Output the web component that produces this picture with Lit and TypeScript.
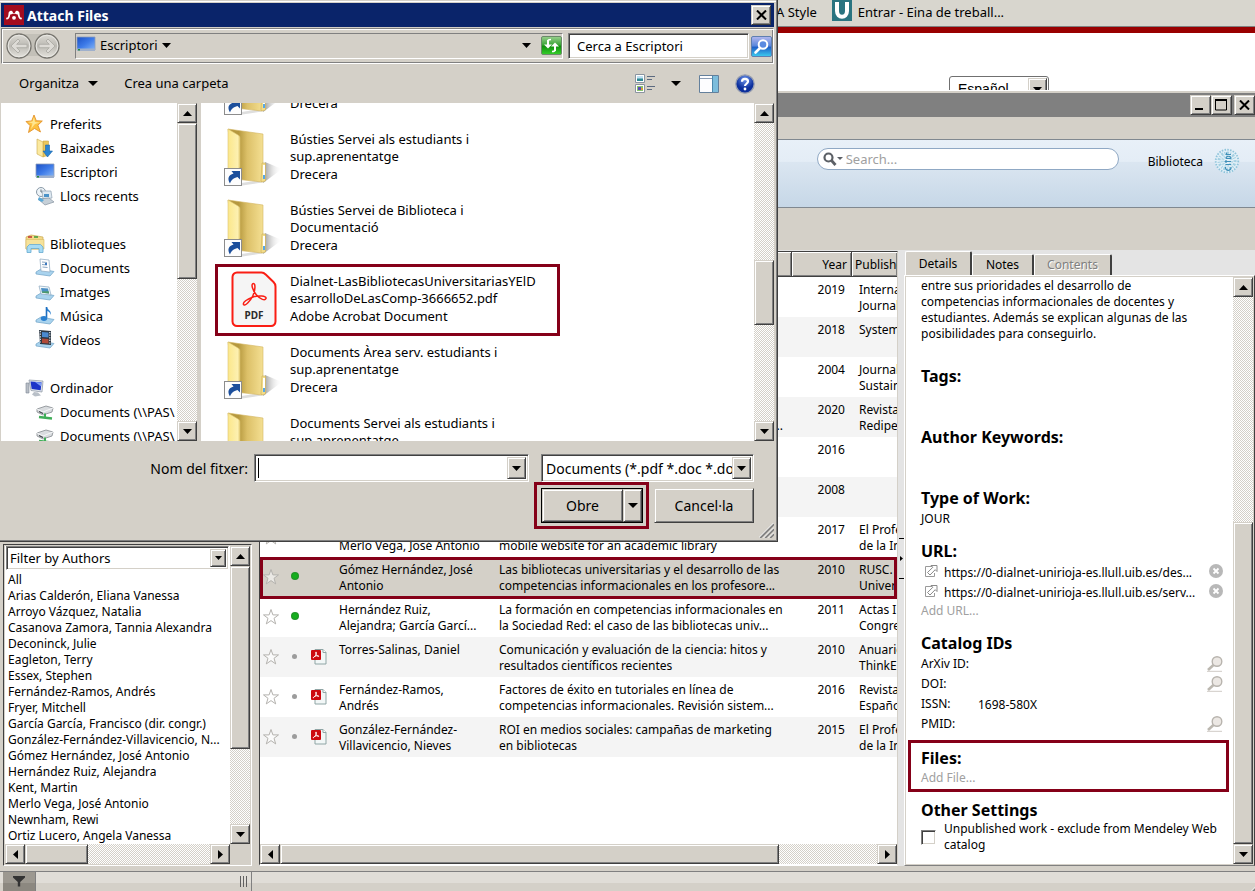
import { LitElement, html, css, nothing, TemplateResult } from "lit";
import { customElement, property } from "lit/decorators.js";

/* ---------- shared classic window styling ---------- */
const classic = css`
  *, *::before, *::after { box-sizing: border-box; }
  button, input, select { font: inherit; color: inherit; margin: 0; padding: 0; border-radius: 0; outline: none; }
  button, select { appearance: none; cursor: default; }
  ul, dl, dd, h2, h3, p { margin: 0; padding: 0; }
  ul { list-style: none; }
  a { color: inherit; text-decoration: none; }
  svg { display: block; flex: none; }
  .raised {
    background: #d4d0c8;
    border: 1px solid;
    border-color: #d4d0c8 #404040 #404040 #d4d0c8;
    box-shadow: inset 1px 1px #fff, inset -1px -1px #808080;
  }
  .sunken {
    background: #fff;
    border: 1px solid;
    border-color: #808080 #fff #fff #808080;
    box-shadow: inset 1px 1px #404040, inset -1px -1px #d4d0c8;
  }
  .glyph { display: flex; align-items: center; justify-content: center; }
  .combo { display: flex; padding: 2px; }
  .combo > .field { flex: 1; min-width: 0; border: 0; background: none; }
  .combo > .drop { flex: none; width: 19px; }
  .mark { position: absolute; border: 3px solid #850018; pointer-events: none; z-index: 2; }
`;

const arrow = (dir: "up" | "down" | "left" | "right") => {
  const d = {
    up: "M0 5h9L4.5 0z",
    down: "M0 0h9L4.5 5z",
    left: "M5 0v9L0 4.5z",
    right: "M0 0v9L5 4.5z",
  }[dir];
  const v = dir === "up" || dir === "down";
  return html`<svg width=${v ? 9 : 5} height=${v ? 5 : 9} aria-hidden="true"><path d=${d}/></svg>`;
};

const wideArrow = html`<svg width="10" height="5" aria-hidden="true"><path d="M0 0h10L5 5z"/></svg>`;
const closeGlyph = html`<svg width="11" height="10" viewBox="0 0 11 10"><path d="M1 .5l9 9M10 .5l-9 9" stroke="#000" stroke-width="2"/></svg>`;

@customElement("scroll-bar")
class ScrollBar extends LitElement {
  @property({ type: Boolean, reflect: true }) horizontal = false;
  @property({ type: Number }) before = 0;
  @property({ type: Number }) thumb = 1;
  @property({ type: Number }) after = 1;
  static styles = [classic, css`
    :host {
      display: flex; flex-direction: column; flex: none; width: 20px;
      background: repeating-conic-gradient(#fff 0 25%, #d4d0c8 0 50%) 0 0 / 2px 2px;
    }
    :host([horizontal]) { flex-direction: row; width: auto; height: 20px; }
    button { flex: none; width: 20px; height: 20px; }
    .space { flex-basis: 0; }
  `];
  render() {
    const h = this.horizontal;
    return html`
      <button class="raised glyph" aria-label=${h ? "Left" : "Up"}>${arrow(h ? "left" : "up")}</button>
      <div class="space" style="flex-grow:${this.before}"></div>
      <div class="space raised" style="flex-grow:${this.thumb}"></div>
      <div class="space" style="flex-grow:${this.after}"></div>
      <button class="raised glyph" aria-label=${h ? "Right" : "Down"}>${arrow(h ? "right" : "down")}</button>`;
  }
}

/* ---------- dialog icons ---------- */
const mendeley = html`<svg width="20" height="20" viewBox="0 0 20 20"><rect width="20" height="20" fill="#a30c1e"/>
  <g fill="none" stroke="#fff" stroke-width="1.800" stroke-linecap="round"><path d="M3 13.500c1.800 0 2.200-1.500 2.500-5.500M17 13.500c-1.800 0-2.200-1.500-2.500-5.500"/></g>
  <path d="M5 7c1.200-1.800 3.300-1.500 3.800.3.300 1.200 2.100 1.200 2.400 0C11.700 5.500 13.800 5.200 15 7c.8 1.800-1 3-2.400 2.300-1.500-.6-3.700-.6-5.200 0C6 10 4.200 8.800 5 7z" fill="#fff"/><circle cx="10" cy="12.800" r="1.900" fill="#fff"/></svg>`;

const navArrows = html`<svg width="56" height="28" viewBox="0 0 56 28">
  <defs><linearGradient id="nb" x2="0" y2="1"><stop offset="0" stop-color="#dcdad4"/><stop offset=".5" stop-color="#bcbab4"/><stop offset="1" stop-color="#e6e4de"/></linearGradient></defs>
  <path d="M14 2h28v22H14z" fill="#c3c0b8"/>
  <g fill="url(#nb)" stroke="#77756f" stroke-width="1.3"><circle cx="14" cy="14" r="12"/><circle cx="42" cy="14" r="12"/></g>
  <g fill="none" stroke="#e9e8e4" stroke-width="1"><circle cx="14" cy="14" r="10.800"/><circle cx="42" cy="14" r="10.800"/></g>
  <g fill="#dddbd6" stroke="#aaa8a2" stroke-width=".8"><path d="M6 14l7-7 2 2-3.300 3.300H22v3.400H11.700L15 19l-2 2z"/><path d="M50 14l-7-7-2 2 3.300 3.300H34v3.400h10.300L41 19l2 2z"/></g></svg>`;

const desktop = html`<svg width="20" height="18" viewBox="0 0 20 18">
  <defs><linearGradient id="dk" x2="1" y2="1"><stop offset="0" stop-color="#1c50c4"/><stop offset=".5" stop-color="#3d7ae8"/><stop offset="1" stop-color="#86b6f6"/></linearGradient></defs>
  <path d="M1 1h18v13H1z" fill="url(#dk)" stroke="#8d9cb8" stroke-width=".8"/><path d="M1 12.500h18V15H1z" fill="#9fb0cc"/><path d="M2 13h2v1.500H2z" fill="#2a8a3a"/></svg>`;

const star = html`<svg width="20" height="20" viewBox="0 0 20 20"><path d="M9 1l2.300 5.700 6 .3-4.400 4.200L15.500 18 9.500 14.500 3.500 18.500l1.600-6.800L1 7.500l5.700-.6z" fill="#fdc040" stroke="#e08a20" stroke-width=".8"/><path d="M9 3l1 5 5 .5-5 1.500-4 5 1.500-5.500L3 8l4.500-.5z" fill="#ffe690"/></svg>`;
const download = html`<svg width="20" height="20" viewBox="0 0 20 20"><path d="M8 3h5.500v14L8 19z" fill="#ecc75a" stroke="#c9a848" stroke-width=".6"/><path d="M2 1l6 3v15l-6-3z" fill="#fbe9a0" stroke="#c9a848" stroke-width=".6"/><path d="M10.500 7h4v6h3L12.500 19 8 13h2.500z" fill="#2a84d2" stroke="#1b64aa" stroke-width=".6"/></svg>`;
const recent = html`<svg width="20" height="20" viewBox="0 0 20 20"><circle cx="6" cy="6" r="4.500" fill="#eef4f8" stroke="#8a9aa8"/><path d="M6 3.500V6h2.500" stroke="#5a6a78" fill="none"/><path d="M7 5h9l1 7-9 1z" fill="#dfe9f1" stroke="#90a2b2" stroke-width=".7"/><path d="M9 8h5v3H9z" fill="#4a92c8"/><path d="M3 13l11-1 5 4-9 3z" fill="#c6d0d8" stroke="#8794a0" stroke-width=".7"/><path d="M4 11l5 3-2 2-4-2z" fill="#58a8d8"/></svg>`;
const libraries = html`<svg width="20" height="20" viewBox="0 0 20 20"><path d="M1 3l5-2 12 2v12H1z" fill="#f3d988" stroke="#c8a850" stroke-width=".7"/><path d="M3 3h4" stroke="#c03030" stroke-width="1.500"/><path d="M9 3h4" stroke="#3a9a3a" stroke-width="1.500"/><path d="M1 5.500h18V15H1z" fill="#f6e29a" stroke="#d8b860" stroke-width=".6"/><path d="M2 18.500V13l2.500-2.500h11L18 13v5.500h-4v-4H6v4z" fill="#a7dbf4" stroke="#66a9d0" stroke-width=".8"/></svg>`;
const docLib = html`<svg width="20" height="20" viewBox="0 0 20 20"><path d="M1 14l5-3 13 2.500-4 4.500L1 16z" fill="#a9d3ee" stroke="#6fa2c6" stroke-width=".7"/><path d="M5 1l9 1 1 12-9-1z" fill="#fdfeff" stroke="#8aa6be" stroke-width=".7"/><path d="M7 4l5 .5M7 6.500l5 .5M7.500 9l5 .5" stroke="#7c9cba" stroke-width=".9"/><path d="M10 5h2v2h-2z" fill="#3a78c0"/></svg>`;
const picLib = html`<svg width="20" height="20" viewBox="0 0 20 20"><path d="M1 14l5-3 13 2.500-4 4.500L1 16z" fill="#a9d3ee" stroke="#6fa2c6" stroke-width=".7"/><path d="M4 4l10 1 2 8-10-1z" fill="#f5fafc" stroke="#8aa6be" stroke-width=".7"/><path d="M6 6l7 .6 1 4.800-7-.6z" fill="#4b8fc4"/><path d="M6.700 9.500l7-.3.5 2.200-7-.6z" fill="#4f9a68"/></svg>`;
const musicLib = html`<svg width="20" height="20" viewBox="0 0 20 20"><path d="M1 14l5-3 13 2.500-4 4.500L1 16z" fill="#a9d3ee" stroke="#6fa2c6" stroke-width=".7"/><path d="M11.500 1v11" stroke="#1e6fc0" stroke-width="1.600"/><ellipse cx="9" cy="12.500" rx="3.200" ry="2.400" fill="#2a80d0"/><path d="M12 1c.5 3 5 3.500 3.500 8-.3-2.500-1.500-3.500-3.500-4z" fill="#2a80d0"/></svg>`;
const videoLib = html`<svg width="20" height="20" viewBox="0 0 20 20"><path d="M1 14l5-3 13 2.500-4 4.500L1 16z" fill="#a9d3ee" stroke="#6fa2c6" stroke-width=".7"/><path d="M4 0l12 1v14L5 14z" fill="#2c3844"/><path d="M7 2l6.500.6v4.800L7 7z" fill="#4a8ad0"/><path d="M7 8.500l6.500.4v4.500L7 13z" fill="#b04a38"/><path d="M5.300 1v13M14.800 2v13" stroke="#e8eef4" stroke-width="1.200" stroke-dasharray="1.200 1.400"/></svg>`;
const computer = html`<svg width="20" height="20" viewBox="0 0 20 20"><path d="M1 5h3v10H1z" fill="#b8bec6" stroke="#7e8894" stroke-width=".6"/><path d="M4 2l14 1-1 11-11-1.500z" fill="#dfe4ea" stroke="#8892a0" stroke-width=".7"/><path d="M5.500 3.500l11 .8-.8 8-9-1.200z" fill="#1c34c8"/><path d="M10 4l6.500.4-.4 4z" fill="#7c9cf4"/><path d="M9 14l4 .5 3 3-6 1-3-2z" fill="#b9c0c8"/></svg>`;
const drive = html`<svg width="20" height="20" viewBox="0 0 20 20"><path d="M2 7l9-3 7 2-1 4-9 3-6-3z" fill="#d9dcdf" stroke="#84898e" stroke-width=".8"/><path d="M2 7l6 3 10-4" fill="none" stroke="#f6f7f8"/><path d="M4 9.500l4 2" stroke="#3a3f44" stroke-width="1.200"/><path d="M4 15l13 1.500" stroke="#3fae58" stroke-width="2.400"/><path d="M10 11.500v4" stroke="#3fae58" stroke-width="2"/></svg>`;

const folder = html`<svg width="60" height="62" viewBox="0 0 60 62">
  <defs>
    <linearGradient id="fb"><stop offset=".3" stop-color="#b5983e"/><stop offset=".55" stop-color="#dcc068"/><stop offset="1" stop-color="#f4df92"/></linearGradient>
    <linearGradient id="ff"><stop offset="0" stop-color="#fbe78a"/><stop offset=".8" stop-color="#fdf0b0"/><stop offset="1" stop-color="#e6cf78"/></linearGradient>
    <linearGradient id="fs"><stop offset="0" stop-color="#909090"/><stop offset="1" stop-color="#fff" stop-opacity="0"/></linearGradient>
  </defs>
  <path d="M42 37l17 7-19 14z" fill="url(#fs)"/><path d="M12 59l26-4 4 2-26 4z" fill="#dedede"/>
  <path d="M5 4l35 5v47l-1 1-27-3z" fill="url(#fb)" stroke="#d3b662" stroke-width=".6"/>
  <path d="M39 38h3.500v18l-3.500 1-1-1z" fill="#f3dc8a" stroke="#cbae58" stroke-width=".6"/><path d="M40 40h2v14h-2z" fill="#fff"/><path d="M40 50h2v4h-2z" fill="#58a8e8"/>
  <path d="M5 4l10 6c2 1 2 2 2 4v28l-2 3v14L5 54z" fill="url(#ff)" stroke="#dcc472" stroke-width=".6"/>
  <rect x="1.500" y="43.500" width="17" height="17" fill="#fdfdfd" stroke="#8c8c8c"/>
  <path d="M7 58.500c-3-5-1.500-8.500 3.500-10L8.500 46H17v8.500l-2.500-2.500c-4 1-6 2.500-7.500 6.500z" fill="#1c4f9c"/></svg>`;

const pdfLarge = html`<svg width="60" height="62" viewBox="-1 0 60 62">
  <path d="M13 5.500h24.500c2 0 3 .8 4.500 2.200l7.500 7.300c1.500 1.400 2 2.500 2 4.500v35a4.500 4.500 0 0 1-4.500 4.500H13a4.500 4.500 0 0 1-4.500-4.500V10A4.500 4.500 0 0 1 13 5.500z" fill="#f5f5f5" stroke="#fa1e14" stroke-width="2"/>
  <path d="M29.500 16.500c-3 0-1 7 3 11.500s8.500 6 9.500 3.500-8-3.500-13-1.500-10.500 5-9.500 7.500 7-3.500 9.500-9 2.500-12 .5-12z" fill="none" stroke="#fa1e14" stroke-width="1.500"/>
  <text x="30" y="51.500" text-anchor="middle" font-family="Noto Sans, sans-serif" font-size="10" font-weight="700" fill="#2c2c2c">PDF</text></svg>`;

const refresh = html`<svg width="21" height="19" viewBox="0 0 21 19"><defs><linearGradient id="gr" x2="0" y2="1"><stop offset="0" stop-color="#9bd08f"/><stop offset=".45" stop-color="#3da63a"/><stop offset=".55" stop-color="#12900f"/><stop offset="1" stop-color="#35d02a"/></linearGradient></defs>
  <rect x=".5" y=".5" width="20" height="18" rx="1.500" fill="url(#gr)" stroke="#6c8a6a"/>
  <path d="M7 4v5M14 15v-5" stroke="#fff" stroke-width="2"/><path d="M7 5q0-1.500 3-1.500" stroke="#fff" stroke-width="1.600" fill="none"/><path d="M14 14q0 1.500-3 1.500" stroke="#fff" stroke-width="1.600" fill="none"/><path d="M3 8.500h8L7 12.500zM10 10.500h8L14 6.500z" fill="#fff"/></svg>`;
const lens = html`<svg width="21" height="21" viewBox="0 0 21 21"><defs><linearGradient id="ls" x2="0" y2="1"><stop offset="0" stop-color="#b4b8ee"/><stop offset=".45" stop-color="#5c88dc"/><stop offset=".55" stop-color="#1f62c8"/><stop offset="1" stop-color="#3ccdf0"/></linearGradient></defs>
  <rect x=".5" y=".5" width="20" height="20" rx="1.500" fill="url(#ls)" stroke="#5f7fb0"/><circle cx="12" cy="8.500" r="4.300" fill="#5a8ae0" stroke="#fff" stroke-width="2"/><path d="M9 12l-4.500 4.500" stroke="#fff" stroke-width="2.600" stroke-linecap="round"/></svg>`;
const views = html`<svg width="20" height="20" viewBox="0 0 20 20"><g fill="#fff" stroke="#8a94a0"><path d="M.5.5h9v8h-9zM.5 10.500h9v8h-9z"/></g><path d="M2 2h6v5H2z" fill="#bfe0f2"/><path d="M2 4.500h6V7H2z" fill="#2f8a94"/><path d="M2 12h6v5H2z" fill="#8ac46c"/><path d="M3 13h3v3H3z" fill="#5a4ab8"/><path d="M6 14h2v2H6z" fill="#d8a030"/><path d="M12 2.500h8M12 5.500h5M12 12.500h8M12 15.500h5" stroke="#5c6a80"/></svg>`;
const preview = html`<svg width="20" height="18" viewBox="0 0 20 18"><path d="M.5.5h19v17H.5z" fill="#fdfdff" stroke="#64809c"/><path d="M1 3.500h12" stroke="#8a9cb4"/><path d="M13.500 1h5.500v16h-5.500z" fill="#7dbddc"/><path d="M13.500 1v16" stroke="#4c88ac"/></svg>`;
const help = html`<svg width="20" height="20" viewBox="0 0 20 20"><defs><radialGradient id="hp" cy=".25"><stop offset="0" stop-color="#6f96ec"/><stop offset="1" stop-color="#0c2f9c"/></radialGradient></defs><circle cx="10" cy="10" r="9.200" fill="url(#hp)" stroke="#9aa0b0" stroke-width="1.300"/><path d="M7 7.800c0-4 6-3.700 6-.3 0 2.200-3 2.300-3 4.500" fill="none" stroke="#fff" stroke-width="2.200"/><circle cx="10" cy="15" r="1.400" fill="#fff"/></svg>`;

const sizeGrip = html`<svg class="grip" width="15" height="15" viewBox="0 0 15 15"><path d="M1 15L15 1M6 15l9-9M11 15l4-4" stroke="#808080" stroke-width="2"/><path d="M-.5 15L15-.5M4.500 15L15 4.500M9.500 15L15 9.500" stroke="#fff"/></svg>`;

interface Place { label: string; icon: TemplateResult; group?: boolean; gap?: boolean }
const places: Place[] = [
  { label: "Preferits", icon: star, group: true },
  { label: "Baixades", icon: download },
  { label: "Escriptori", icon: desktop },
  { label: "Llocs recents", icon: recent },
  { label: "Biblioteques", icon: libraries, group: true, gap: true },
  { label: "Documents", icon: docLib },
  { label: "Imatges", icon: picLib },
  { label: "Música", icon: musicLib },
  { label: "Vídeos", icon: videoLib },
  { label: "Ordinador", icon: computer, group: true, gap: true },
  { label: "Documents (\\\\PAS\\", icon: drive },
  { label: "Documents (\\\\PAS\\", icon: drive },
];

interface FileItem { name: string[]; kind: string; pdf?: boolean }
const files: FileItem[] = [
  { name: ["", ""], kind: "Drecera" },
  { name: ["Bústies Servei als estudiants i", "sup.aprenentatge"], kind: "Drecera" },
  { name: ["Bústies Servei de Biblioteca i", "Documentació"], kind: "Drecera" },
  { name: ["Dialnet-LasBibliotecasUniversitariasYElD", "esarrolloDeLasComp-3666652.pdf"], kind: "Adobe Acrobat Document", pdf: true },
  { name: ["Documents Àrea serv. estudiants i", "sup.aprenentatge"], kind: "Drecera" },
  { name: ["Documents Servei als estudiants i", "sup.aprenentatge"], kind: "" },
];

@customElement("attach-dialog")
class AttachDialog extends LitElement {
  static styles = [classic, css`
    :host {
      display: flex; flex-direction: column; background: #d4d0c8;
      border: solid; border-width: 0 1px 1px 0; border-color: #404040;
      box-shadow: inset -1px -1px #808080, inset 0 1px #d4d0c8, inset 0 2px #fff;
      padding: 3px 3px 3px 1px; font-size: 13px; line-height: 17px;
    }
    .title { display: flex; align-items: center; gap: 3px; height: 24px; padding: 0 3px; background: #0a246a; color: #fff; }
    .title h2 { flex: 1; font-size: 14px; }
    .title button { width: 20px; height: 20px; }
    .nav { display: flex; align-items: center; height: 36px; margin-top: 1px; padding: 0 1px 0 3px; border: 1px solid; border-color: #808080 #fff #fff #808080; box-shadow: inset 1px 1px #fff, inset -1px -1px #808080; }
    .path { flex: 1; display: flex; align-items: center; gap: 4px; height: 26px; margin: 0 5px 0 14px; padding-bottom: 2px; border: 1px solid; border-color: #808080 #fff #fff #808080; }
    .path .fill { flex: 1; }
    .path button { border: 0; background: none; }
    .path .go { margin-left: 6px; }
    .search { width: 181px; height: 26px; padding: 0 8px 1px; margin-right: 2px; }
    .search::placeholder { color: #000; opacity: 1; }
    .lens { border: 0; background: none; }
    .tools { display: flex; align-items: center; height: 39px; padding: 0 19px 0 18px; }
    .tools button { display: flex; align-items: center; gap: 9px; border: 0; background: none; }
    .tools .new { margin: 0 auto 0 26px; }
    .tools .views { gap: 16px; margin-right: 18px; }
    .tools .pane { margin-right: 16px; }
    .body { flex: 1; min-height: 0; display: flex; gap: 4px; }
    .side { display: flex; width: 196px; background: #fff; }
    .places { flex: 1; min-width: 0; overflow: hidden; padding-top: 9px; }
    .places li { display: flex; align-items: center; gap: 5px; height: 24px; padding-left: 34px; white-space: nowrap; }
    .places li.group { padding-left: 24px; }
    .places li.gap { margin-top: 24px; }
    .main { flex: 1; min-width: 0; display: flex; background: #fff; }
    .files { flex: 1; min-width: 0; overflow: hidden; }
    .files ul { margin-top: -49px; }
    .files li { position: relative; display: flex; gap: 7px; height: 71px; padding-left: 22px; white-space: pre; }
    .files .name { padding-top: 6px; }
    .files .name div { height: 17px; }
    .files .kind { line-height: 18px; }
    .files .mark { inset: -3px 194px 2px 14px; }
    form { display: grid; grid-template-columns: 246px 275px 219px; grid-template-rows: 28px 35px; gap: 6px 6px; padding: 13px 0 15px 1px; font-size: 14px; position: relative; }
    form label { justify-self: end; align-self: center; }
    .type { margin-left: 6px; }
    .type .field { padding-left: 2px; text-overflow: clip; }
    .name-field .field { padding-left: 2px; }
    .name-field .field:placeholder-shown { background: linear-gradient(#000, #000) 1px 50% / 1px 20px no-repeat; }
    .actions { grid-column: 3; display: flex; justify-content: space-between; padding-left: 6px; }
    .open { position: relative; display: flex; width: 102px; border: 1px solid #000; }
    .open .text { flex: 1; }
    .open .more { width: 19px; }
    .open .mark { inset: -7px -7px -7px -8px; }
    .cancel { width: 100px; }
    .grip { position: absolute; right: 0; bottom: 0; }
  `];
  render() {
    return html`
      <div class="title">${mendeley}<h2>Attach Files</h2><button class="raised glyph" aria-label="Close">${closeGlyph}</button></div>
      <div class="nav">
        ${navArrows}
        <div class="path">${desktop}<span>Escriptori</span><button aria-label="Open path">${arrow("down")}</button><span class="fill"></span>
          <button aria-label="Previous locations">${arrow("down")}</button><button class="go" aria-label="Refresh">${refresh}</button></div>
        <input class="search sunken" placeholder="Cerca a Escriptori" aria-label="Cerca a Escriptori">
        <button class="lens" aria-label="Search">${lens}</button>
      </div>
      <div class="tools">
        <button>Organitza ${wideArrow}</button>
        <button class="new">Crea una carpeta</button>
        <button class="views" aria-label="Views">${views}${wideArrow}</button>
        <button class="pane" aria-label="Preview pane">${preview}</button>
        <button aria-label="Help">${help}</button>
      </div>
      <div class="body">
        <div class="side">
          <ul class="places">${places.map((p) => html`<li class="${p.group ? "group" : ""} ${p.gap ? "gap" : ""}">${p.icon}<span>${p.label}</span></li>`)}</ul>
          <scroll-bar .before=${0} .thumb=${155} .after=${143}></scroll-bar>
        </div>
        <div class="main">
          <div class="files"><ul>${files.map((f) => html`<li>${f.pdf ? pdfLarge : folder}
            <div class="name">${f.name.map((n) => html`<div>${n}</div>`)}<div class="kind">${f.kind}</div></div>
            ${f.pdf ? html`<span class="mark"></span>` : nothing}</li>`)}</ul></div>
          <scroll-bar .before=${138} .thumb=${63} .after=${97}></scroll-bar>
        </div>
      </div>
      <form @submit=${(e: Event) => e.preventDefault()}>
        <label for="fname">Nom del fitxer:</label>
        <div class="combo sunken name-field"><input id="fname" class="field" placeholder=" "><button type="button" class="drop raised glyph" aria-label="Recent names">${arrow("down")}</button></div>
        <div class="combo sunken type"><select class="field" aria-label="File type"><option>Documents (*.pdf *.doc *.do</option></select><span class="drop raised glyph">${arrow("down")}</span></div>
        <div class="actions">
          <div class="open"><button type="submit" class="text raised">Obre</button><button type="button" class="more raised glyph" aria-label="More">${wideArrow}</button><span class="mark"></span></div>
          <button type="button" class="cancel raised">Cancel·la</button>
        </div>
        ${sizeGrip}
      </form>`;
  }
}

/* ---------- library window ---------- */
const rowStar = html`<svg width="18" height="18" viewBox="0 0 18 18"><path d="M9 1.500l1.900 5.400h5.600l-4.500 3.400 1.700 5.600L9 12.600l-4.700 3.300L6 10.300 1.500 6.900h5.600z" fill="rgba(255,255,255,.5)" stroke="#b4b2ae"/></svg>`;
const pdfSmall = html`<svg width="16" height="17" viewBox="0 0 16 17"><path d="M4 1.500h8l3 3v11.500H4z" fill="#f2f7f7" stroke="#8fa5a5"/><path d="M12 1.500v3h3" fill="#fff" stroke="#8fa5a5"/><rect x="0" y="2" width="10" height="10" rx="1" fill="#cc0a10"/><path d="M5 4c-.8 0-.3 2 .6 3.300s2.500 1.500 2.300.8S4 7.500 2.500 9.300 4 8.500 4.800 7 5.800 4 5 4z" fill="none" stroke="#fff" stroke-width=".9"/></svg>`;

interface Row { mark?: "unread" | "read"; pdf?: boolean; authors?: string[]; title?: string[]; tail?: boolean; year: string; pub: string[]; selected?: boolean }
const rows: Row[] = [
  { year: "2019", pub: ["Interna", "Journal"] },
  { year: "2018", pub: ["System"] },
  { year: "2004", pub: ["Journal", "Sustain"] },
  { year: "2020", pub: ["Revista", "Redipe"], title: ["", "..."], tail: true },
  { year: "2016", pub: [] },
  { year: "2008", pub: [] },
  { year: "2017", pub: ["El Profe", "de la In"], authors: ["", "Merlo Vega, José Antonio"], title: ["", "mobile website for an academic library"] },
  { year: "2010", pub: ["RUSC.", "Univer"], authors: ["Gómez Hernández, José", "Antonio"], title: ["Las bibliotecas universitarias y el desarrollo de las", "competencias informacionales en los profesore..."], mark: "unread", selected: true },
  { year: "2011", pub: ["Actas I", "Congre"], authors: ["Hernández Ruiz,", "Alejandra; García Garcí..."], title: ["La formación en competencias informacionales en", "la Sociedad Red: el caso de las bibliotecas univ..."], mark: "unread" },
  { year: "2010", pub: ["Anuario", "ThinkE"], authors: ["Torres-Salinas, Daniel"], title: ["Comunicación y evaluación de la ciencia: hitos y", "resultados científicos recientes"], mark: "read", pdf: true },
  { year: "2016", pub: ["Revista", "Españo"], authors: ["Fernández-Ramos,", "Andrés"], title: ["Factores de éxito en tutoriales en línea de", "competencias informacionales. Revisión sistem..."], mark: "read", pdf: true },
  { year: "2015", pub: ["El Profe", "de la In"], authors: ["González-Fernández-", "Villavicencio, Nieves"], title: ["ROI en medios sociales: campañas de marketing", "en bibliotecas"], mark: "read", pdf: true },
];
const lines = (t?: string[]) => (t ?? []).map((l) => html`<div>${l}</div>`);

const authors = ["All", "Arias Calderón, Eliana Vanessa", "Arroyo Vázquez, Natalia", "Casanova Zamora, Tannia Alexandra", "Deconinck, Julie", "Eagleton, Terry", "Essex, Stephen", "Fernández-Ramos, Andrés", "Fryer, Mitchell", "García García, Francisco (dir. congr.)", "González-Fernández-Villavicencio, N...", "Gómez Hernández, José Antonio", "Hernández Ruiz, Alejandra", "Kent, Martin", "Merlo Vega, José Antonio", "Newnham, Rewi", "Ortiz Lucero, Angela Vanessa"];

const extLink = html`<svg width="14" height="14" viewBox="0 0 14 14"><path d="M8 2.500H1.500v10h9V9" fill="none" stroke="#9a9a9a"/><path d="M3.500 8.500L8.800 3.300 7 1.500h6v6l-1.800-1.800L6 11z" fill="#fff" stroke="#8a8a8a"/></svg>`;
const removeIcon = html`<svg width="14" height="14" viewBox="0 0 14 14"><circle cx="7" cy="7" r="7" fill="#b8b8b8"/><path d="M4.500 4.500l5 5M9.500 4.500l-5 5" stroke="#fff" stroke-width="1.800"/></svg>`;
const lookup = html`<svg width="16" height="16" viewBox="0 0 16 16"><path d="M0 15.500h15" stroke="#d8d4d0" stroke-width="1.500"/><path d="M6.500 9L1 14" stroke="#bcb8b0" stroke-width="2.600"/><circle cx="10" cy="5.500" r="4.800" fill="#ece8e4" stroke="#b8b4ae" stroke-width="1.400"/></svg>`;
const searchGlyph = html`<svg width="20" height="14" viewBox="0 0 20 14"><circle cx="5.500" cy="5.500" r="4" fill="none" stroke="#5c6066" stroke-width="2.200"/><path d="M8.500 8.500l4 4.500" stroke="#5c6066" stroke-width="2.800"/><path d="M14 5h6l-3 3z" fill="#5c6066"/></svg>`;
const badge = html`<svg width="26" height="26" viewBox="0 0 26 26"><circle cx="13" cy="13" r="12" fill="#e2eff7"/><circle cx="13" cy="13" r="11.300" fill="none" stroke="#8fc3da" stroke-width="1.800" stroke-dasharray="1.500 1.300"/><circle cx="13" cy="13" r="8" fill="none" stroke="#a4d0e2" stroke-width="3" stroke-dasharray="1 1.600 2 1.200"/><circle cx="13" cy="13" r="4.500" fill="none" stroke="#b6dae8" stroke-width="3" stroke-dasharray="1.500 1"/><g fill="none" stroke="#3f8fb8" stroke-width="1.200"><path d="M11.500 19c-.5 4.500 6 4.500 5.500 0M11.500 16.500h5.500M10.500 13.500h6.500M12 12v3M12 10.500c0-3 5-3 5 0M12 10.500h5M11.500 6.500h5.500M12.500 4.500v2"/></g></svg>`;
const funnel = html`<svg width="12" height="11" viewBox="0 0 12 11"><path d="M0 0h12v1.500L7.200 6v4.500H4.800V6L0 1.500z" fill="#333"/></svg>`;

@customElement("library-window")
class LibraryWindow extends LitElement {
  static styles = [classic, css`
    :host { display: flex; flex-direction: column; background: #d4d0c8; font-size: 12px; line-height: 16px; border-top: 1px solid #fff; padding-top: 2px; }
    .title { display: flex; align-items: center; justify-content: flex-end; height: 24px; background: #808080; }
    .title button { width: 21px; height: 20px; }
    .title .close { margin-left: 2px; }
    .menu { height: 22px; }
    .toolbar { display: flex; align-items: flex-start; justify-content: flex-end; gap: 29px; height: 69px; padding: 8px 15px 0 0; border: solid; border-width: 1px 0; border-color: #808890; background: linear-gradient(#e8f0f8, #e4edf6 32%, #dbe6f1 33%, #c6d7e7); }
    .search { display: flex; align-items: center; gap: 3px; width: 302px; height: 22px; padding: 0 5px; border: 1px solid #8fa8c4; border-radius: 11px; background: #fff; font-size: 13px; }
    .search input { flex: 1; border: 0; background: none; min-width: 0; }
    .search input::placeholder { color: #a0a0a0; opacity: 1; }
    .toolbar a { padding-top: 6px; }
    .account { display: flex; gap: 11px; }
    .strip { height: 42px; }
    .panes { flex: 1; min-height: 0; display: flex; background: #e4e4e4; }
    .left { display: flex; flex-direction: column; width: 252px; padding-left: 3px; background: #d4d0c8; }
    .tree { flex: 1; }
    .filter { display: grid; grid-template-columns: 1fr 20px; grid-template-rows: 1fr 20px; height: 322px; padding: 1px; border: 1px solid; border-color: #404040 #fff #fff #404040; }
    .filter .box { background: #fff; overflow: hidden; min-width: 0; }
    .filter .combo { height: 24px; margin: 0 1px 1px; font-size: 13px; }
    .filter .combo .drop { width: 16px; }
    .filter .combo .field { padding-left: 1px; }
    .filter .corner { background: #d4d0c8; }
    .filter li { height: 16px; line-height: 18px; padding-left: 3px; white-space: nowrap; }
    .gutter { width: 7px; background: #d4d0c8; }
    .center { flex: 1; min-width: 0; display: flex; flex-direction: column; margin-top: 1px; border-left: 1px solid #404040; border-top: 1px solid #404040; border-bottom: 2px solid #fff; border-right: 1px solid #d4d0c8; background: #fff; }
    .rows { flex: 1; overflow: hidden; position: relative; }
    table { width: 100%; table-layout: fixed; border-collapse: separate; border-spacing: 0; }
    th { height: 25px; padding: 2px 0 0 5px; font-weight: 400; text-align: left; white-space: nowrap; overflow: hidden; background: #d4d0c8; border: solid; border-width: 0 1px 1px 0; border-color: #404040; box-shadow: inset 1px 1px #fff, inset -1px -1px #808080; }
    th:last-child { padding-left: 3px; border-right: 0; }
    th.year { text-align: right; padding-right: 4px; }
    td { height: 40px; padding: 5px 0 0; vertical-align: top; white-space: nowrap; overflow: hidden; }
    td div { height: 16px; }
    tr:nth-child(even) td { background: #f4f4f4; }
    tr.selected td { background: #d4d0c8; }
    tr.selected { position: relative; }
    tr.selected td:last-child { overflow: visible; }
    tr .mark { inset: 0 0 -2px 0; }
    .c-star { width: 24px; } .c-dot { width: 22px; } .c-pdf { width: 24px; }
    .c-author { width: 160px; } .c-title { width: 302px; } .c-year { width: 60px; }
    td.star { padding: 11px 0 0 2px; }
    td.dot { padding: 15px 0 0 7px; }
    td.pdf { padding: 11px 0 0 5px; }
    td.text { padding-left: 9px; }
    td.tail { text-align: right; padding-right: 9px; }
    td.year { text-align: right; padding-right: 7px; }
    td.pub { padding-left: 7px; }
    .unread, .read { display: block; border-radius: 50%; }
    .unread { width: 8px; height: 8px; background: radial-gradient(#14b01c 30%, #2a7a30); }
    .read { width: 5px; height: 5px; margin: 2px 1px; background: #9c9c9c; }
    .splitter { display: flex; flex-direction: column; align-items: center; justify-content: center; width: 6px; }
    .splitter button { width: 5px; height: 41px; border: solid #000; border-width: 1px 0; background: none; }
    .right { display: flex; flex-direction: column; width: 351px; }
    .tabs { display: flex; align-items: flex-end; height: 24px; padding-left: 1px; margin-top: 1px; }
    .tabs button { height: 21px; background: #d4d0c8; border: solid; border-width: 1px 2px 0 1px; border-color: #fff #404040 #fff #fff; border-radius: 2px 2px 0 0; }
    .tabs .on { width: 67px; height: 24px; }
    .tabs .notes { width: 62px; }
    .tabs .contents { width: 78px; color: #808080; text-shadow: 1px 1px #fff; }
    .page { flex: 1; min-height: 0; display: flex; border: 1px solid; border-color: #fff #404040 #808080 #fff; padding: 1px; background: #d4d0c8; }
    .details { flex: 1; min-width: 0; overflow: hidden; background: #fff; padding: 1px 10px 0 15px; }
    section { position: relative; margin-top: 14px; }
    section.open { margin-top: 24px; min-height: 37px; }
    h3 { font-size: 16px; line-height: 20px; }
    .value { padding-top: 3px; }
    .link { display: flex; align-items: center; gap: 6px; height: 20px; padding-left: 3px; }
    .link a { flex: 1; min-width: 0; overflow: hidden; white-space: nowrap; padding-top: 3px; }
    .link button, .ids button { border: 0; background: none; }
    .add { display: block; color: #a0a0a0; border: 0; background: none; padding-top: 2px; }
    .ids { padding-top: 1px; }
    .ids > div { display: flex; align-items: center; height: 20px; }
    .ids dt { width: 57px; }
    .ids dd { flex: 1; padding-top: 2px; }
    .details .mark { inset: -8px -6px -6px -13px; }
    .check { display: flex; align-items: center; gap: 8px; padding-top: 1px; }
    .check input { appearance: none; width: 15px; height: 15px; flex: none; }
    .status { display: flex; height: 20px; margin-top: 5px; padding-left: 3px; border-top: 1px solid #808080; background: linear-gradient(#e0ddd7 0 60%, #d4d0c8 60%); position: relative; }
    .status button { width: 33px; border: 0; border-right: 1px solid #808080; background: linear-gradient(#9c9890 0 60%, #8c8880 60%); }
    .status .seg { display: flex; justify-content: flex-end; align-items: center; width: 216px; padding-right: 4px; border-right: 1px solid #808080; }
    .bars { width: 7px; height: 11px; background: repeating-linear-gradient(90deg, #606060 0 1px, transparent 1px 3px); }
    .grip { position: absolute; right: -6px; bottom: -6px; }
  `];
  render() {
    return html`
      <div class="title">
        <button class="raised glyph" aria-label="Minimize"><svg width="11" height="12"><path d="M0 9h8v2H0z"/></svg></button>
        <button class="raised glyph" aria-label="Maximize"><svg width="13" height="12"><path d="M.5 1h11v10H.5z" fill="none" stroke="#000"/><path d="M0 0h12v2H0z"/></svg></button>
        <button class="raised glyph close" aria-label="Close">${closeGlyph}</button>
      </div>
      <div class="menu"></div>
      <div class="toolbar">
        <label class="search">${searchGlyph}<input placeholder="Search..." aria-label="Search"></label>
        <div class="account"><a href="#">Biblioteca</a>${badge}</div>
      </div>
      <div class="strip"></div>
      <div class="panes">
        <div class="left">
          <div class="tree"></div>
          <div class="filter">
            <div class="box">
              <div class="combo sunken"><select class="field" aria-label="Filter"><option>Filter by Authors</option></select><span class="drop raised glyph"><svg width="7" height="4"><path d="M0 0h7L3.5 4z"/></svg></span></div>
              <ul>${authors.map((a) => html`<li>${a}</li>`)}</ul>
            </div>
            <scroll-bar .before=${0} .thumb=${183} .after=${76}></scroll-bar>
            <scroll-bar horizontal .before=${0} .thumb=${61} .after=${123}></scroll-bar>
            <div class="corner"></div>
          </div>
        </div>
        <div class="gutter"></div>
        <div class="center">
          <div class="rows"><table>
            <colgroup><col class="c-star"><col class="c-dot"><col class="c-pdf"><col class="c-author"><col class="c-title"><col class="c-year"><col></colgroup>
            <thead><tr><th></th><th></th><th></th><th></th><th></th><th class="year">Year</th><th>Publishe</th></tr></thead>
            <tbody>${rows.map((r) => html`<tr class=${r.selected ? "selected" : ""}>
              <td class="star">${rowStar}</td>
              <td class="dot">${r.mark ? html`<span class=${r.mark}></span>` : nothing}</td>
              <td class="pdf">${r.pdf ? pdfSmall : nothing}</td>
              <td class="text">${lines(r.authors)}</td>
              <td class="text ${r.tail ? "tail" : ""}">${lines(r.title)}</td>
              <td class="year">${r.year}</td>
              <td class="pub">${lines(r.pub)}${r.selected ? html`<span class="mark"></span>` : nothing}</td></tr>`)}</tbody>
          </table></div>
          <scroll-bar horizontal .before=${0} .thumb=${499} .after=${98}></scroll-bar>
        </div>
        <div class="splitter"><button class="glyph" aria-label="Collapse details"><svg width="3" height="5"><path d="M0 0v5l3-2.5z"/></svg></button></div>
        <div class="right">
          <div class="tabs"><button class="on">Details</button><button class="notes">Notes</button><button class="contents">Contents</button></div>
          <div class="page">
            <div class="details">
              <p>entre sus prioridades el desarrollo de<br>competencias informacionales de docentes y<br>estudiantes. Además se explican algunas de las<br>posibilidades para conseguirlo.</p>
              <section class="open"><h3>Tags:</h3></section>
              <section class="open"><h3>Author Keywords:</h3></section>
              <section class="open"><h3>Type of Work:</h3><div class="value">JOUR</div></section>
              <section><h3>URL:</h3>
                ${["https://0-dialnet-unirioja-es.llull.uib.es/des...", "https://0-dialnet-unirioja-es.llull.uib.es/serv..."].map((u) => html`<div class="link">${extLink}<a href="#">${u}</a><button aria-label="Remove URL">${removeIcon}</button></div>`)}
                <button class="add">Add URL...</button></section>
              <section><h3>Catalog IDs</h3><dl class="ids">
                ${[["ArXiv ID:", ""], ["DOI:", ""], ["ISSN:", "1698-580X"], ["PMID:", ""]].map(([k, v]) => html`<div><dt>${k}</dt><dd>${v}</dd>${v ? nothing : html`<button aria-label="Look up ${k}">${lookup}</button>`}</div>`)}
              </dl></section>
              <section><h3>Files:</h3><button class="add">Add File...</button><span class="mark"></span></section>
              <section><h3>Other Settings</h3><label class="check"><input class="sunken" type="checkbox"><span>Unpublished work - exclude from Mendeley Web<br>catalog</span></label></section>
            </div>
            <scroll-bar .before=${226} .thumb=${322} .after=${0}></scroll-bar>
          </div>
        </div>
      </div>
      <div class="status"><button class="glyph" aria-label="Filter">${funnel}</button><div class="seg"><div class="bars"></div></div>${sizeGrip}</div>`;
  }
}

@customElement("app-root")
class AppRoot extends LitElement {
  static styles = [classic, css`
    :host { display: block; position: relative; height: 100vh; overflow: hidden; background: #fff; color: #000; font-family: "Noto Sans", "Open Sans", sans-serif; }
    .bookmarks { display: flex; justify-content: flex-start; height: 27px; padding-left: 776px; background: #d8d6ce; border-bottom: 1px solid #808080; font-size: 13px; line-height: 24px; white-space: nowrap; }
    .bookmarks a { display: flex; gap: 6px; margin-right: 15px; }
    .rule { height: 6px; background: #990000; }
    .page { display: flex; justify-content: flex-end; padding: 43px 206px 0 0; }
    .lang { height: 26px; width: 100px; border: 1px solid #707070; border-radius: 3px; font: 14px/22px "Liberation Sans", sans-serif; padding: 1px; }
    .lang .field { padding-left: 7px; }
    library-window { position: absolute; inset: 90px 0 0 0; }
    attach-dialog { position: absolute; left: 0; top: 0; width: 778px; height: 542px; z-index: 3; }
  `];
  render() {
    return html`
      <div class="bookmarks"><a href="#">A Style</a><a href="#"><svg width="20" height="21" viewBox="0 0 20 21"><path d="M0 0h20v21H0z" fill="#2a7480"/><path d="M5 2v9c0 7.500 10 7.500 10 0V2" fill="none" stroke="#fff" stroke-width="4"/></svg>Entrar - Eina de treball...</a></div>
      <div class="rule"></div>
      <div class="page"><div class="combo lang"><select class="field" aria-label="Language"><option>Español</option></select><span class="drop raised glyph">${arrow("down")}</span></div></div>
      <library-window></library-window>
      <attach-dialog></attach-dialog>`;
  }
}
